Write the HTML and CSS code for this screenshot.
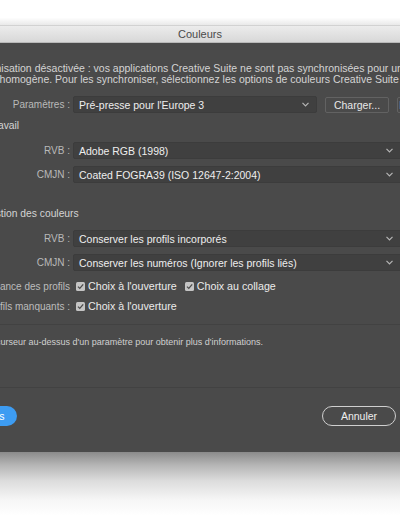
FILE: index.html
```html
<!DOCTYPE html>
<html lang="fr">
<head>
<meta charset="utf-8">
<title>Couleurs</title>
<link rel="stylesheet" href="styles.css">
</head>
<body>
<div class="page">
  <div class="top-space"></div>
  <div class="dialog">
    <div class="titlebar">Couleurs</div>
    <div class="body">
      <p class="intro">Synchronisation désactivée : vos applications Creative Suite ne sont pas synchronisées pour une gestion des<br>couleurs homogène. Pour les synchroniser, sélectionnez les options de couleurs Creative Suite dans Bridge.</p>

      <div class="row row-params">
        <div class="label">Paramètres :</div>
        <div class="select select-short"><span class="value">Pré-presse pour l'Europe 3</span><svg class="chev" width="7" height="5" viewBox="0 0 7 5"><path d="M0.5 0.8 L3.5 3.8 L6.5 0.8" fill="none" stroke="#b5b5b5" stroke-width="1.2"/></svg></div>
        <button class="btn-flat">Charger...</button>
        <button class="btn-flat">Enregistrer...</button>
      </div>

      <div class="section">Espaces de travail</div>
      <div class="row row-first">
        <div class="label">RVB :</div>
        <div class="select select-long"><span class="value">Adobe RGB (1998)</span><svg class="chev" width="7" height="5" viewBox="0 0 7 5"><path d="M0.5 0.8 L3.5 3.8 L6.5 0.8" fill="none" stroke="#b5b5b5" stroke-width="1.2"/></svg></div>
      </div>
      <div class="row row-next">
        <div class="label">CMJN :</div>
        <div class="select select-long"><span class="value">Coated FOGRA39 (ISO 12647-2:2004)</span><svg class="chev" width="7" height="5" viewBox="0 0 7 5"><path d="M0.5 0.8 L3.5 3.8 L6.5 0.8" fill="none" stroke="#b5b5b5" stroke-width="1.2"/></svg></div>
      </div>

      <div class="section section-2">Règles de gestion des couleurs</div>
      <div class="row row-first">
        <div class="label">RVB :</div>
        <div class="select select-long"><span class="value">Conserver les profils incorporés</span><svg class="chev" width="7" height="5" viewBox="0 0 7 5"><path d="M0.5 0.8 L3.5 3.8 L6.5 0.8" fill="none" stroke="#b5b5b5" stroke-width="1.2"/></svg></div>
      </div>
      <div class="row row-next">
        <div class="label">CMJN :</div>
        <div class="select select-long"><span class="value">Conserver les numéros (Ignorer les profils liés)</span><svg class="chev" width="7" height="5" viewBox="0 0 7 5"><path d="M0.5 0.8 L3.5 3.8 L6.5 0.8" fill="none" stroke="#b5b5b5" stroke-width="1.2"/></svg></div>
      </div>

      <div class="row row-check row-check-1">
        <div class="label label-check">Non-concordance des profils</div>
        <label class="check"><svg class="cb" width="9" height="9" viewBox="0 0 9 9"><rect x="0" y="0" width="9" height="9" rx="1.5" fill="#c4c4c4"/><path d="M2 4.6 L3.8 6.4 L7.2 2.4" fill="none" stroke="#4a4a4a" stroke-width="1.3"/></svg><span>Choix à l'ouverture</span></label>
        <label class="check check-2"><svg class="cb" width="9" height="9" viewBox="0 0 9 9"><rect x="0" y="0" width="9" height="9" rx="1.5" fill="#c4c4c4"/><path d="M2 4.6 L3.8 6.4 L7.2 2.4" fill="none" stroke="#4a4a4a" stroke-width="1.3"/></svg><span>Choix au collage</span></label>
      </div>
      <div class="row row-check row-check-2">
        <div class="label label-check">Profils manquants :</div>
        <label class="check"><svg class="cb" width="9" height="9" viewBox="0 0 9 9"><rect x="0" y="0" width="9" height="9" rx="1.5" fill="#c4c4c4"/><path d="M2 4.6 L3.8 6.4 L7.2 2.4" fill="none" stroke="#4a4a4a" stroke-width="1.3"/></svg><span>Choix à l'ouverture</span></label>
      </div>

      <div class="hint-zone">
        <p class="hint">Placez le curseur au-dessus d'un paramètre pour obtenir plus d'informations.</p>
      </div>

      <div class="footer">
        <button class="btn-blue">Plus d'options</button>
        <div class="footer-right">
          <button class="btn-round">Annuler</button>
          <button class="btn-round">OK</button>
        </div>
      </div>
    </div>
  </div>
  <div class="shadow"></div>
</div>
</body>
</html>
```
FILE: styles.css
```css
* { box-sizing: border-box; }
html, body {
  margin: 0;
  padding: 0;
  background: #ffffff;
  font-family: "Liberation Sans", Arial, sans-serif;
}
.page {
  width: 400px;
  height: 516px;
  overflow: hidden;
}
.top-space {
  height: 25px;
  background: linear-gradient(#ffffff 0%, #ffffff 70%, #e9e9e9 100%);
}
.dialog {
  width: 585px;
  margin-left: -85px;
}
.titlebar {
  height: 18px;
  border-top: 1px solid #d2d2d2;
  background: linear-gradient(#ececec, #d8d8d8);
  border-bottom: 1px solid #b9b9b9;
  color: #4a4a4a;
  font-size: 11px;
  line-height: 16px;
  text-align: center;
  padding-right: 15px;
}
.body {
  background: #4a4a4a;
  padding: 20px 20px 25px 20px;
  height: 409px;
}
.intro {
  margin: 0 0 11px 22px;
  font-size: 10.5px;
  line-height: 11px;
  color: #d4d4d4;
  white-space: nowrap;
}
.row {
  display: flex;
  align-items: center;
  gap: 3px;
  height: 17px;
}
.label {
  width: 135px;
  flex: none;
  display: flex;
  justify-content: flex-end;
  white-space: nowrap;
  font-size: 10px;
  color: #b9b9b9;
}
.select {
  height: 17px;
  flex: none;
  display: flex;
  align-items: center;
  justify-content: space-between;
  background: #404040;
  border: 1px solid #3c3c3c;
  border-radius: 2px;
  padding: 0 7px 0 5px;
}
.select-short { width: 244px; }
.select-long { width: 329px; padding-right: 8px; }
.value {
  font-size: 10.5px;
  color: #eeeeee;
  white-space: nowrap;
}
.chev { flex: none; }
.btn-flat {
  flex: none;
  width: 64px;
  height: 16px;
  margin-left: 5px;
  background: #4a4a4a;
  border: 1px solid #626262;
  border-radius: 2px;
  color: #e8e8e8;
  font-family: "Liberation Sans", Arial, sans-serif;
  font-size: 10.5px;
  padding: 0;
  white-space: nowrap;
}
.section {
  margin-top: 6px;
  height: 14px;
  line-height: 14px;
  font-size: 10.3px;
  color: #d4d4d4;
  white-space: nowrap;
}
.section-2 { margin-top: 24px; }
.row-first { margin-top: 9px; }
.row-next { margin-top: 7px; }
.row-check { height: 14px; gap: 6px; }
.row-check-1 { margin-top: 8px; }
.row-check-2 { margin-top: 6px; }
.label-check { color: #bcbcbc; }
.check {
  display: flex;
  align-items: center;
  gap: 3px;
  font-size: 10.7px;
  color: #eaeaea;
  white-space: nowrap;
}
.check-2 { margin-left: 2px; }
.cb { flex: none; }
.hint-zone {
  margin-top: 11px;
  border-top: 1px solid #424242;
  border-bottom: 1px solid #424242;
  height: 64px;
  padding-top: 11px;
}
.hint {
  margin: 0 0 0 22px;
  font-size: 9px;
  line-height: 12px;
  color: #d0d0d0;
  white-space: nowrap;
}
.footer {
  margin-top: 18px;
  display: flex;
  justify-content: space-between;
  align-items: center;
}
.footer-right {
  display: flex;
  gap: 10px;
}
.btn-blue {
  width: 82px;
  height: 20px;
  border: none;
  border-radius: 10px;
  background: #3d9cf2;
  color: #ffffff;
  font-family: "Liberation Sans", Arial, sans-serif;
  font-size: 10.5px;
  padding: 0 8px 0 0;
  white-space: nowrap;
}
.btn-round {
  width: 74px;
  height: 20px;
  border: 1px solid #cfcfcf;
  border-radius: 10px;
  background: transparent;
  color: #eeeeee;
  font-family: "Liberation Sans", Arial, sans-serif;
  font-size: 10.5px;
  padding: 0;
}
.shadow {
  height: 64px;
  background: linear-gradient(#8a8a8a 0%, #b4b4b4 20%, #dcdcdc 45%, #f6f6f6 75%, #ffffff 100%);
}
```
